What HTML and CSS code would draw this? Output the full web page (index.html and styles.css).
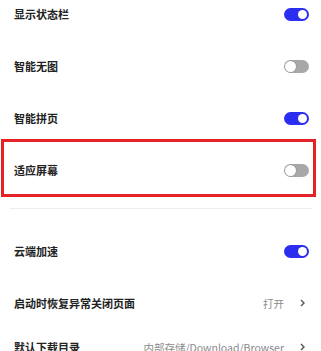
FILE: index.html
```html
<!DOCTYPE HTML><html>
<head>
  <title>设置</title>
  <meta name="viewport" content="width=device-width, initial-scale=1">
  <link rel="stylesheet" href="styles.css">
</head>
<body>
  <div class="list">
    <div class="row">
      <span class="label">显示状态栏</span>
      <span class="switch on"></span>
    </div>
    <div class="row">
      <span class="label">智能无图</span>
      <span class="switch"></span>
    </div>
    <div class="row">
      <span class="label">智能拼页</span>
      <span class="switch on"></span>
    </div>
    <div class="row marked">
      <span class="label">适应屏幕</span>
      <span class="switch"></span>
    </div>
  </div>
  <div class="divider"></div>
  <div class="list second">
    <div class="row">
      <span class="label">云端加速</span>
      <span class="switch on"></span>
    </div>
    <div class="row">
      <span class="label">启动时恢复异常关闭页面</span>
      <span class="value">打开 <svg class="arrow" width="5" height="8" viewBox="0 0 5 8"><path d="M1 1 L4 4 L1 7" fill="none" stroke="#555" stroke-width="1.4"/></svg></span>
    </div>
    <div class="row last">
      <span class="label">默认下载目录</span>
      <span class="value">内部存储/Download/Browser <svg class="arrow" width="5" height="8" viewBox="0 0 5 8"><path d="M1 1 L4 4 L1 7" fill="none" stroke="#555" stroke-width="1.4"/></svg></span>
    </div>
  </div>
</body>
</html>
```

FILE: styles.css
```css
html {
  font-family: "Noto Sans CJK SC", "Noto Sans", sans-serif;
}
body {
  margin: 0;
  background: #fff;
  overflow: hidden;
}
.list {
  margin-top: -12px;
}
.second {
  margin-top: 16px;
}
.row {
  position: relative;
  height: 52px;
  display: flex;
  align-items: center;
  justify-content: space-between;
  padding: 0 12px 0 14px;
}
.row.last {
  height: 36px;
}
.label {
  font-size: 11px;
  font-weight: 600;
  color: #222;
}
.value {
  display: flex;
  align-items: center;
  gap: 16px;
  font-size: 10.5px;
  color: #8a8a8a;
  margin-right: 4px;
}
.switch {
  position: relative;
  width: 25px;
  height: 13px;
  border-radius: 7px;
  background: #a8a8a8;
}
.switch::after {
  content: "";
  position: absolute;
  left: 1px;
  top: 1px;
  width: 11px;
  height: 11px;
  border-radius: 50%;
  background: #fff;
  box-shadow: 0 0 0 0.5px #8a8a8a;
}
.switch.on {
  background: #2d2df0;
}
.switch.on::after {
  left: 14px;
  top: 2px;
  width: 9px;
  height: 9px;
  box-shadow: none;
}
.marked::before {
  content: "";
  position: absolute;
  top: -5px;
  left: 1px;
  right: 5px;
  height: 52px;
  border: 3px solid #e52128;
}
.divider {
  height: 1px;
  background: #eeeeee;
  margin: 12px 9px 0 10px;
}
```
